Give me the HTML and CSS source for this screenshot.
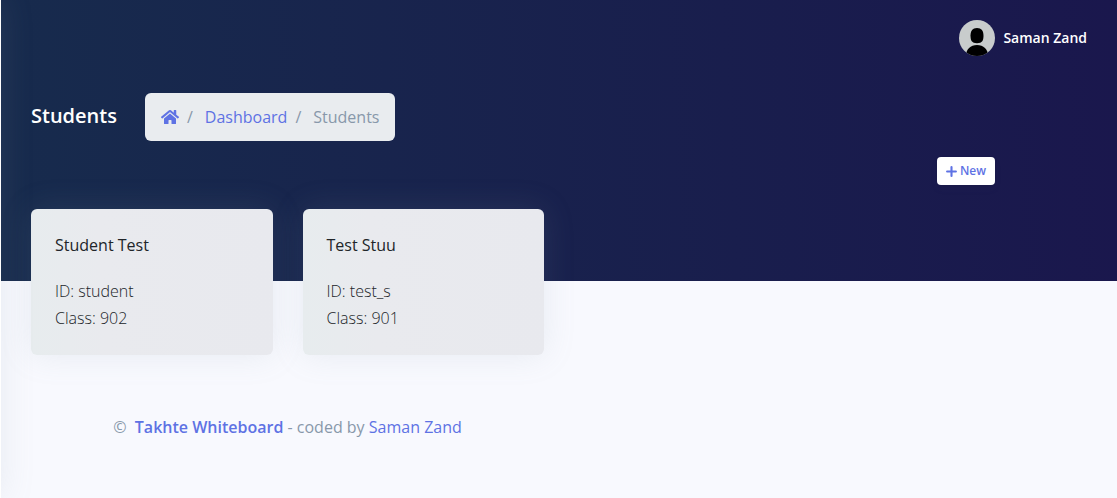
FILE: index.html
```html
<!DOCTYPE html>
<html lang="en">
<head>
<meta charset="utf-8">
<meta name="viewport" content="width=device-width, initial-scale=1">
<title>Students</title>
<link rel="stylesheet" href="styles.css">
</head>
<body>
<aside class="sidebar"></aside>
<main class="main">
  <header class="header">
    <nav class="topbar">
      <a class="profile" href="#">
        <svg class="avatar" viewBox="0 0 36 36" aria-hidden="true">
          <defs><clipPath id="round"><circle cx="18" cy="18" r="18"/></clipPath></defs>
          <g clip-path="url(#round)">
            <rect width="36" height="36" fill="#c8cccc"/>
            <path d="M18 8c4.500 0 6.500 3 6.500 7.500 0 5-1.200 7.700-6.500 7.700s-6.500-2.700-6.500-7.700C11.500 11 13.500 8 18 8z"/>
            <path d="M7 36c0-7 4.500-11 11-11s11 4 11 11z"/>
          </g>
        </svg>
        <span>Saman Zand</span>
      </a>
    </nav>
    <div class="heading">
      <h1 class="title">Students</h1>
      <nav aria-label="Breadcrumb">
        <ol class="breadcrumb">
          <li><a class="home" href="#" aria-label="Home"><svg viewBox="0 0 576 512" width="18" height="16" fill="currentColor" aria-hidden="true"><path d="M280 148 96 300v164a16 16 0 0 0 16 16l112-0a16 16 0 0 0 16-16v-96a16 16 0 0 1 16-16h64a16 16 0 0 1 16 16v96a16 16 0 0 0 16 16h112a16 16 0 0 0 16-16V300L296 148a12 12 0 0 0-16 0zM572 251l-84-69V44a12 12 0 0 0-12-12h-56a12 12 0 0 0-12 12v72l-89-74a48 48 0 0 0-61 0L4 251a12 12 0 0 0-2 17l26 31a12 12 0 0 0 17 2L280 107a12 12 0 0 1 16 0l235 194a12 12 0 0 0 17-2l26-31a12 12 0 0 0-2-17z"/></svg></a></li>
          <li><a href="#">Dashboard</a></li>
          <li aria-current="page">Students</li>
        </ol>
      </nav>
    </div>
    <div class="actions">
      <button class="new" type="button"><svg viewBox="0 0 12 12" width="11" height="11" fill="none" stroke="currentColor" stroke-width="2.300" stroke-linecap="round" aria-hidden="true"><path d="M6 1.200v9.600M1.200 6h9.600"/></svg>New</button>
    </div>
  </header>
  <section class="cards">
    <article class="card">
      <h2 class="name">Student Test</h2>
      <p class="details">ID: student<br>Class: 902</p>
    </article>
    <article class="card">
      <h2 class="name">Test Stuu</h2>
      <p class="details">ID: test_s<br>Class: 901</p>
    </article>
  </section>
  <footer class="footer">
    <p class="copyright">©&nbsp; <a class="brand" href="#">Takhte Whiteboard</a> - coded by <a href="#">Saman Zand</a></p>
  </footer>
</main>
</body>
</html>
```
FILE: styles.css
```css
* { box-sizing: border-box; }
body {
  margin: 0;
  min-height: 100vh;
  display: flex;
  background: #f8f9fe;
  color: #525f7f;
  font: 400 16px/24px "Open Sans", sans-serif;
}
h1, h2, p, ol { margin: 0; padding: 0; }
a { color: #5e72e4; text-decoration: none; }
/* Collapsed navigation drawer: only its edge and shadow show. */
.sidebar {
  flex: 0 0 250px;
  margin-left: -249px;
  position: relative;
  z-index: 1;
  background: #fff;
  box-shadow: 0 0 32px rgba(136, 152, 170, .15);
}
.main { flex: 1; min-width: 0; }
.header {
  padding: 20px 30px 96px;
  background: linear-gradient(87deg, #172b4d, #1a174d);
}
.topbar { display: flex; justify-content: flex-end; }
.profile {
  display: flex;
  align-items: center;
  gap: 8px;
  color: #fff;
  font-size: 14px;
  font-weight: 600;
}
.avatar { width: 36px; height: 36px; }
.heading {
  display: flex;
  align-items: center;
  gap: 28px;
  margin-top: 37px;
}
.title { padding-bottom: 2px; color: #fff; font-size: 20px; line-height: 28px; font-weight: 600; }
.breadcrumb {
  display: flex;
  padding: 12px 16px;
  border-radius: 6px;
  background: #e9ecef;
  list-style: none;
  color: #8898aa;
}
.breadcrumb li + li::before { content: "/"; padding: 0 12px 0 8px; }
.home svg { vertical-align: -2px; }
.actions {
  display: flex;
  justify-content: center;
  width: calc(25% + 8px);
  margin: 16px -15px 0 auto;
}
.new {
  display: flex;
  align-items: center;
  gap: 3px;
  padding: 5px 9px;
  border: 0;
  border-radius: 4px;
  background: #fff;
  color: #5e72e4;
  font: 600 12px/18px "Open Sans", sans-serif;
  box-shadow: 0 4px 6px rgba(50, 50, 93, .11), 0 1px 3px rgba(0, 0, 0, .08);
}
.cards {
  display: grid;
  grid-template-columns: repeat(4, 1fr);
  gap: 30px;
  margin-top: -72px;
  padding: 0 30px;
}
.card {
  padding: 24px 24px 23px;
  border-radius: 6px;
  background: linear-gradient(87deg, #e7ecee, #e9eaee 30%, #e8e9ee);
  box-shadow: 0 0 32px rgba(136, 152, 170, .15);
}
.name { margin-bottom: 21px; color: #212529; font-size: 16px; font-weight: 400; }
.details { color: #212529; font-weight: 300; line-height: 27px; }
.footer { padding: 60px 15px 40px; }
.copyright { width: 50%; text-align: center; color: #8898aa; }
.brand { font-weight: 600; }
```
